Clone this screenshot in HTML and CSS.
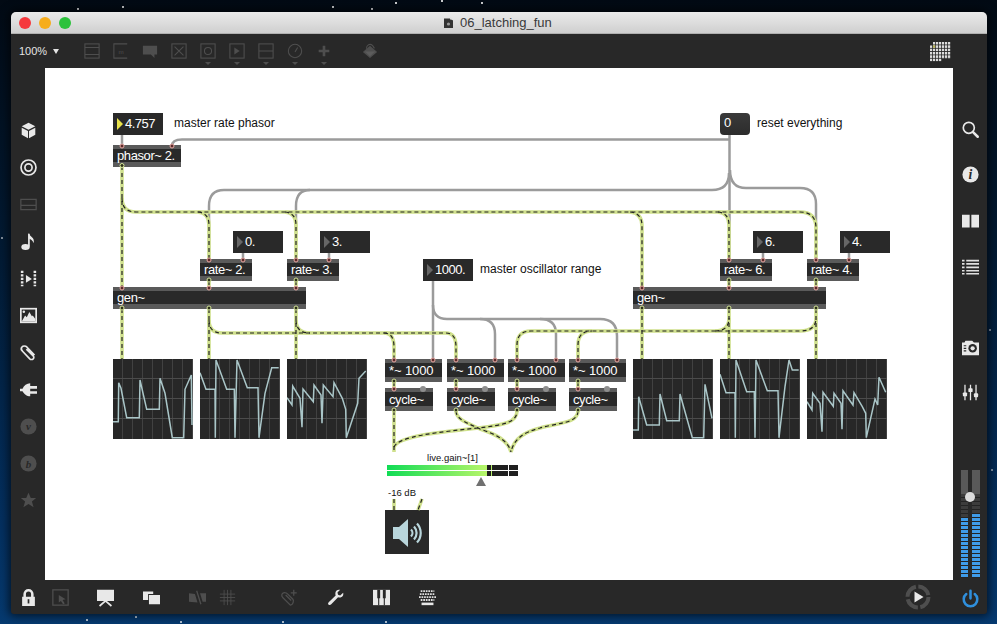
FILE: index.html
```html
<!DOCTYPE html>
<html lang="en">
<head>
<meta charset="utf-8">
<title>06_latching_fun</title>
<link rel="stylesheet" href="styles.css">
</head>
<body>
<div class="window">
  <header class="titlebar">
    <div class="lights"><span class="light red"></span><span class="light amber"></span><span class="light green"></span></div>
    <div class="title">
      <svg class="doc" viewBox="0 0 9 11"><path d="M0 1.5h6l3 2V11H0z" fill="#333"/><path d="M6 0l3 2.5H6z" fill="#ddd"/><circle cx="4.5" cy="7" r="1.6" fill="#999"/></svg>
      <span>06_latching_fun</span>
    </div>
  </header>

  <div class="toolbar">
    <div class="zoomlabel">100% <span class="zoomcaret"></span></div>
    <div class="tool"><svg class="ti" viewBox="0 0 18 18"><rect x="1" y="1" width="16" height="16" fill="none"/><path d="M1 5h16M1 13h16"/></svg></div>
    <div class="tool"><svg class="ti" viewBox="0 0 18 18"><path d="M16 1H1v16h15" fill="none"/><text x="9" y="12" class="ti-text">m</text></svg></div>
    <div class="tool"><svg class="ti" viewBox="0 0 18 18"><path class="fill" d="M1 3h16v10h-3v4l-4-4H1z"/></svg></div>
    <div class="tool"><svg class="ti" viewBox="0 0 18 18"><rect x="1" y="1" width="16" height="16" fill="none"/><path d="M4 4l10 10M14 4L4 14"/></svg></div>
    <div class="tool"><svg class="ti" viewBox="0 0 18 18"><rect x="1" y="1" width="16" height="16" fill="none"/><circle cx="9" cy="9" r="4" fill="none"/></svg><span class="caret"></span></div>
    <div class="tool"><svg class="ti" viewBox="0 0 18 18"><rect x="1" y="1" width="16" height="16" fill="none"/><path class="fill" d="M6 5l6 4-6 4z"/></svg><span class="caret"></span></div>
    <div class="tool"><svg class="ti" viewBox="0 0 18 18"><rect x="1" y="1" width="16" height="16" fill="none"/><path d="M1 9h16"/></svg><span class="caret"></span></div>
    <div class="tool"><svg class="ti" viewBox="0 0 18 18"><circle cx="9" cy="9" r="7.5" fill="none"/><path d="M9 10l3-5"/></svg><span class="caret"></span></div>
    <div class="tool"><svg class="ti" viewBox="0 0 18 18"><path class="fill" d="M7.5 3h3v4.500h4.500v3h-4.500V15h-3v-4.500H3v-3h4.500z"/></svg><span class="caret"></span></div>
    <div class="tool tool-paint"><svg class="ti" viewBox="0 0 18 18"><path class="fill" d="M9 3l8 7-8 7-8-7z"/><path d="M5 6.500C5 2 9 0 12 3l2 3" fill="none"/><path class="lit" d="M3 9.500h12L9 15z"/></svg></div>
    <svg class="gridicon" viewBox="0 0 21 20">
      <defs><pattern id="dots" width="3" height="3.333" patternUnits="userSpaceOnUse"><rect width="2.200" height="2.500" fill="#dcdcdc"/></pattern></defs>
      <path d="M3 0h18v16.700h-9V20H0V3.300h3z" fill="url(#dots)"/>
      <rect x="3" y="3.300" width="2.200" height="2.500" fill="#b9b45a"/>
    </svg>
  </div>

  <div class="middle">
    <nav class="side side-left">
      <svg class="si" viewBox="0 0 20 20"><path class="w" d="M10 1l8 4-8 4-8-4zM2 6.700l7.400 3.800V19L2 15zM18 6.700l-7.400 3.800V19L18 15z"/></svg>
      <svg class="si" viewBox="0 0 20 20"><circle cx="10" cy="10" r="8.800" class="wl"/><circle cx="10" cy="10" r="4.200" class="wl"/></svg>
      <svg class="si" viewBox="0 0 20 20"><path class="dl" d="M1 4h18v12H1zM1 11h18"/></svg>
      <svg class="si" viewBox="0 0 20 20"><ellipse cx="6.500" cy="16.500" rx="5" ry="3.500" class="w"/><path class="wl" d="M10.500 16V1"/><path class="w" d="M10 0c1 4 8 5 6 12-.5-3-4-5-6-5.500z"/></svg>
      <svg class="si" viewBox="0 0 20 20"><path class="w" d="M7 6l7 4.500L7 15z"/><path class="wdots" d="M2.500 1v18M17.500 1v18"/></svg>
      <svg class="si" viewBox="0 0 20 20"><rect x="1" y="2" width="18" height="16" class="wl"/><circle cx="4.500" cy="5.500" r="1.500" class="w"/><path class="w" d="M2 17l4-7 2 2 3-6 3 5 1-1 3 4v3z"/></svg>
      <svg class="si" viewBox="0 0 20 20"><path class="wl" d="M17 13L8 3.500C6.500 2 3.500 2 2.300 3.500 1 5 1.500 7 3 8.500l8.500 9c1 1 3 1 4 0s1-2.500 0-3.500L7.500 6"/></svg>
      <svg class="si" viewBox="0 0 20 20"><path class="w" d="M0 9h3C4.500 5 8 2.500 12 2.500V6h8v3h-8v3h8v3h-8v3C8 18 4.500 15 3 12H0z"/></svg>
      <svg class="si" viewBox="0 0 20 20"><circle cx="10" cy="10" r="9.500" class="d"/><text x="10" y="14" class="badge">v</text></svg>
      <svg class="si" viewBox="0 0 20 20"><circle cx="10" cy="10" r="9.500" class="d"/><text x="10" y="15" class="badge">b</text></svg>
      <svg class="si" viewBox="0 0 20 20"><path class="d" d="M10 1l2.700 6h6.300l-5 4.300 2 6.700-6-3.800L4 18l2-6.700L1 7h6.300z"/></svg>
    </nav>

    <main class="canvas">
      <div class="node num n-rate"><span class="tri tri-on"></span>4.757</div>
      <div class="node comment c-rate">master rate phasor</div>
      <div class="node obj n-phasor">phasor~ 2.</div>
      <div class="node msg n-reset">0</div>
      <div class="node comment c-reset">reset everything</div>

      <div class="node num n-a"><span class="tri"></span>0.</div>
      <div class="node num n-b"><span class="tri"></span>3.</div>
      <div class="node num n-c"><span class="tri"></span>6.</div>
      <div class="node num n-d"><span class="tri"></span>4.</div>

      <div class="node obj rate r-a">rate~ 2.</div>
      <div class="node obj rate r-b">rate~ 3.</div>
      <div class="node obj rate r-c">rate~ 6.</div>
      <div class="node obj rate r-d">rate~ 4.</div>

      <div class="node num n-range"><span class="tri"></span>1000.</div>
      <div class="node comment c-range">master oscillator range</div>

      <div class="node obj gen g-l">gen~</div>
      <div class="node obj gen g-r">gen~</div>

      <div class="node scope s-1"><svg viewBox="0 0 80 80"><polyline points="0,62.700 5.300,62.700 5.700,23.700 8,29.300 13.700,58.700 26.300,58.700 27,21 33.700,50.300 46.300,50.300 47,19.300 52,34.300 59.300,78.700 70.700,78.700 72,30.300 78.300,16 79,66"/></svg></div>
      <div class="node scope s-2"><svg viewBox="0 0 80 80"><polyline points="0,13.700 6,30.300 15,30.300 15.300,78.700 16,1 26.700,30.300 34.300,30.300 35,78.700 37,1 47.300,28.700 58,28.700 59,78.700 65,34.300 71.700,8.700 78.700,8.700"/></svg></div>
      <div class="node scope s-3"><svg viewBox="0 0 80 80"><polyline points="0,38.700 5,46 5.700,27 13,39.300 15,68.300 16,30 26.300,42.700 27,26 34,36 35,64.300 36.300,26 46,37.700 47,23.700 55.300,39.300 58.700,50.300 59.300,78.700 70.700,44.300 72,19.300 78.700,12"/></svg></div>
      <div class="node scope s-4"><svg viewBox="0 0 80 80"><polyline points="0,71 5.300,71 5.700,37.700 13.700,66 26.300,66 27,35 33.700,61.700 46.300,61.700 47,35 59.300,78.700 70.700,78.700 72,25.300 79,59.300"/></svg></div>
      <div class="node scope s-5"><svg viewBox="0 0 80 80"><polyline points="0,15.300 6,33.700 15,33.700 15.300,78.700 16,1 26.700,32.700 34.300,32.700 35,78.700 36,1 47.300,31.700 58,31.700 59,78.700 65,27.700 69,1 72.300,11 78.700,11"/></svg></div>
      <div class="node scope s-6"><svg viewBox="0 0 80 80"><polyline points="0,42.700 5,51 5.700,34.300 13,44.300 15,72.700 16,33.300 26.300,47.300 27,34.300 34,44.300 35,70.300 36,31.700 46,46 47,33.700 55.300,47.700 58.700,54.300 59.300,78.700 68,40 70.700,46 72,18.300 78.700,33.300"/></svg></div>

      <div class="node obj mul m-1">*~ 1000</div>
      <div class="node obj mul m-2">*~ 1000</div>
      <div class="node obj mul m-3">*~ 1000</div>
      <div class="node obj mul m-4">*~ 1000</div>

      <div class="node obj cyc y-1">cycle~</div>
      <div class="node obj cyc y-2">cycle~</div>
      <div class="node obj cyc y-3">cycle~</div>
      <div class="node obj cyc y-4">cycle~</div>

      <div class="node gain">
        <div class="gain-label">live.gain~[1]</div>
        <div class="gain-meter">
          <div class="gain-row"><span class="gain-fill"></span><span class="gain-tick"></span><span class="gain-div"></span></div>
          <div class="gain-row"><span class="gain-fill"></span><span class="gain-tick"></span><span class="gain-div"></span></div>
        </div>
        <span class="gain-thumb"></span>
      </div>
      <div class="node db">-16 dB</div>

      <div class="node dac">
        <svg viewBox="0 0 44 44"><path class="spk" d="M8 17h6l9-8v28l-9-8H8z"/><path class="spk-arc" d="M26 19.500a5 5 0 0 1 0 7M29 16.500a9.500 9.500 0 0 1 0 13M32 13.500a14 14 0 0 1 0 19"/></svg>
      </div>

      <svg class="wires" viewBox="45 68 908 512">
        <defs>
          <g id="sigpaths">
            <path d="M122 166V287"/>
            <path d="M122 198Q122 212 136 212H800Q816 212 816 228V259"/>
            <path d="M198 212Q209 213 209 225V259"/>
            <path d="M285 212Q296 213 296 225V259"/>
            <path d="M630 212Q642 213 642 226V287"/>
            <path d="M718 212Q729 213 729 225V259"/>
            <path d="M209 281V287M296 281V287M729 281V287M816 281V287"/>
            <path d="M122 309V359M209 309V359M296 309V359M642 309V359M729 309V359M816 309V359"/>
            <path d="M209 320Q209 333 222 333H446Q456 333 456 347V359"/>
            <path d="M384 333Q394 333 394 347V359"/>
            <path d="M296 320Q296 333 310 333"/>
            <path d="M517 359V345Q517 331 531 331H800Q816 331 816 318"/>
            <path d="M578 359V345Q578 331 592 331"/>
            <path d="M715 331Q729 331 729 318"/>
            <path d="M394 382V388M456 382V388M517 382V388M578 382V388"/>
            <path d="M394 411V452"/>
            <path d="M394 447C398 436 440 432 478 428C505 425 517 422 517 411"/>
            <path d="M456 411C456 420 470 424 480 429C495 434 508 440 511 452"/>
            <path d="M578 411C578 424 555 423 540 428C525 432 514 438 511 452"/>
            <path d="M394 499V510M422 499L418 510"/>
          </g>
        </defs>
        <g class="patch">
          <path d="M122 135V145"/>
          <path d="M729.500 135V259"/>
          <path d="M729 139.500H182Q172 139.500 172 146"/>
          <path d="M729 173Q729 190 712 190H224Q209 190 209 206V259"/>
          <path d="M310 190Q296 190 296 206V259"/>
          <path d="M730 170Q730 188 746 188H800Q816 188 816 204V259"/>
          <path d="M243 253V259M329 253V259M763 253V259M849 253V259"/>
          <path d="M433 281V359"/>
          <path d="M433 305Q433 319 447 319H600Q617 319 617 336V359"/>
          <path d="M480 319Q495 319 495 334V359"/>
          <path d="M540 319Q556 319 556 334V359"/>
        </g>
        <use href="#sigpaths" class="sig-base"/>
        <use href="#sigpaths" class="sig-dash"/>
        <g class="inlets">
          <circle cx="122" cy="146" r="2"/><circle cx="172" cy="146" r="2"/>
          <circle cx="122" cy="288" r="2"/><circle cx="209" cy="288" r="2"/><circle cx="296" cy="288" r="2"/>
          <circle cx="642" cy="288" r="2"/><circle cx="729" cy="288" r="2"/><circle cx="816" cy="288" r="2"/>
          <circle cx="209" cy="260" r="2"/><circle cx="243" cy="260" r="2"/><circle cx="296" cy="260" r="2"/><circle cx="329" cy="260" r="2"/>
          <circle cx="729" cy="260" r="2"/><circle cx="763" cy="260" r="2"/><circle cx="816" cy="260" r="2"/><circle cx="849" cy="260" r="2"/>
          <circle cx="394" cy="360" r="2"/><circle cx="433" cy="360" r="2"/><circle cx="456" cy="360" r="2"/><circle cx="495" cy="360" r="2"/>
          <circle cx="517" cy="360" r="2"/><circle cx="556" cy="360" r="2"/><circle cx="578" cy="360" r="2"/><circle cx="617" cy="360" r="2"/>
          <circle cx="394" cy="389" r="2"/><circle cx="456" cy="389" r="2"/><circle cx="517" cy="389" r="2"/><circle cx="578" cy="389" r="2"/>
        </g>
        <g class="inlets-dim">
          <circle cx="423" cy="389" r="3"/><circle cx="485" cy="389" r="3"/><circle cx="546" cy="389" r="3"/><circle cx="607" cy="389" r="3"/>
        </g>
        <g class="outlets">
          <circle cx="122" cy="165.500" r="2"/>
          <circle cx="209" cy="280" r="2"/><circle cx="296" cy="280" r="2"/><circle cx="729" cy="280" r="2"/><circle cx="816" cy="280" r="2"/>
          <circle cx="122" cy="308" r="2"/><circle cx="209" cy="308" r="2"/><circle cx="296" cy="308" r="2"/>
          <circle cx="642" cy="308" r="2"/><circle cx="729" cy="308" r="2"/><circle cx="816" cy="308" r="2"/>
          <circle cx="394" cy="381" r="2"/><circle cx="456" cy="381" r="2"/><circle cx="517" cy="381" r="2"/><circle cx="578" cy="381" r="2"/>
          <circle cx="394" cy="410" r="2"/><circle cx="456" cy="410" r="2"/><circle cx="517" cy="410" r="2"/><circle cx="578" cy="410" r="2"/>
        </g>
      </svg>
    </main>

    <aside class="side side-right">
      <svg class="si" viewBox="0 0 20 20"><circle cx="8" cy="8" r="6.500" class="wl"/><path class="wl thick" d="M13 13L18.500 18.500"/></svg>
      <svg class="si" viewBox="0 0 20 20"><circle cx="10" cy="10" r="9.500" class="w"/><text x="10" y="15.500" class="info">i</text></svg>
      <svg class="si book" viewBox="0 0 20 20"><path class="w" d="M0 2h9v15H0zM11 2h9v15h-9z"/></svg>
      <svg class="si" viewBox="0 0 20 20"><path class="wbars" d="M5 3h15M5 7h15M5 11h15M5 15h15M5 18.500h15"/><path class="wbars" d="M0 3h3M0 7h3M0 11h3M0 15h3M0 18.500h3"/></svg>
      <svg class="si camera" viewBox="0 0 20 20"><path class="w" d="M0 4h3l1-2h8l2 2h6v15H0z"/><circle cx="12.500" cy="11" r="5" class="k"/><circle cx="12.500" cy="11" r="2.500" class="w"/><path class="kl" d="M2 8h3M2 11h3M2 14h3"/></svg>
      <svg class="si" viewBox="0 0 20 20"><path class="wl thin" d="M3.500 1v18M10 1v18M16.500 1v18"/><rect x="1" y="10" width="5" height="4.500" rx="1" class="w"/><rect x="7.500" y="5" width="5" height="4.500" rx="1" class="w"/><rect x="14" y="11" width="5" height="4.500" rx="1" class="w"/></svg>
      <div class="dspmeter">
        <div class="dspcol"><span class="dsp-top"></span><span class="dsp-off dsp-off-l"></span><span class="dsp-blue dsp-blue-l"></span></div>
        <div class="dspcol"><span class="dsp-top"></span><span class="dsp-off dsp-off-r"></span><span class="dsp-blue dsp-blue-r"></span></div>
        <span class="dspknob"></span>
      </div>
    </aside>
  </div>

  <footer class="bottombar">
    <svg class="si" viewBox="0 0 20 20"><path class="wl thick" d="M5.500 9V6a4.500 4.500 0 0 1 9 0v3"/><path class="w" d="M2.500 9h15v11h-15z"/><rect x="9" y="12" width="2" height="5" class="k"/></svg>
    <svg class="si b-tight" viewBox="0 0 20 20"><rect x="1" y="1" width="18" height="18" class="dl"/><path class="d" d="M8 7l8 5-3.500 1 2.500 4-2 1-2.500-4-2.500 2z"/></svg>
    <svg class="si b-near" viewBox="0 0 20 20"><path class="w" d="M0 1h20v13H0z"/><path class="wl" d="M10 14l-7 6M10 14l7 6"/></svg>
    <svg class="si" viewBox="0 0 20 20"><path class="w" d="M0 3h12v3H6v7H0z"/><path class="w" d="M7 7h13v11H7z"/></svg>
    <svg class="si" viewBox="0 0 20 20"><path class="d" d="M0 5l7 1 3 10-10-1zM13 5h7v10h-4z"/><path class="dl" d="M9 2l5 16"/></svg>
    <svg class="si b-grid" viewBox="0 0 20 20"><path class="dl thin" d="M6 1v18M10 1v18M14 1v18M1 6h18M1 10h18M1 14h18"/></svg>
    <svg class="si b-far" viewBox="0 0 20 20"><path class="dl" d="M11 19L2 10C0 8 1 5 3 4.500S7 5 8 6l6 6c1.500 2 0 7-3 7zM5.500 7l6.500 6.500"/><path class="dl" d="M15 1v7M11.500 4.500h7"/></svg>
    <svg class="si" viewBox="0 0 20 20"><path class="w" d="M19 4.500l-3.500 3-2.500-.7-.7-2.600L15.500 1C12.500.2 9.700 2 9.800 5.500c0 1 .2 1.500.4 2L2 15.500c-1 1-1 2.300 0 3s2 .6 3-.5l8-8.300c4 1.500 7-1.500 6-5.200z"/></svg>
    <svg class="si" viewBox="0 0 20 20"><path class="w" d="M0 1h20v18H0z"/><path class="kl" d="M6.700 2v17M13.300 2v17"/><path class="k" d="M5 1h3.400v10H5zM11.600 1H15v10h-3.400z"/></svg>
    <svg class="si" viewBox="0 0 20 20"><path class="wkeys" d="M2 2.500h16M1 6h18M0 9.500h20M2 13h16"/><path class="w" d="M3 16h14v3H3z"/></svg>
    <svg class="playbtn" viewBox="0 0 26 26"><circle cx="13" cy="13" r="10.500" class="ring"/><path class="w" d="M9.500 7.500l9 5.500-9 5.500z"/></svg>
    <svg class="si powerbtn" viewBox="0 0 20 20"><path class="pw" d="M10 2v9M5 6a8 8 0 1 0 10 0"/></svg>
  </footer>
</div>
</body>
</html>
```

FILE: styles.css
```css
* { box-sizing: border-box; }
html, body { height: 100%; }
body {
  margin: 0;
  overflow: hidden;
  font-family: "Liberation Sans", Arial, sans-serif;
  background-color: #02101f;
  background-image:
    radial-gradient(circle at 78px 9px, #fff 0, rgba(255,255,255,.8) .7px, transparent 1.3px),
    radial-gradient(circle at 123px 7px, #fff 0, rgba(255,255,255,.8) .7px, transparent 1.3px),
    radial-gradient(circle at 333px 7px, #fff 0, rgba(255,255,255,.8) .7px, transparent 1.3px),
    radial-gradient(circle at 372px 9px, #fff 0, rgba(255,255,255,.8) .7px, transparent 1.3px),
    radial-gradient(circle at 396px 3px, #fff 0, rgba(255,255,255,.8) .7px, transparent 1.3px),
    radial-gradient(circle at 442px 1px, #fff 0, rgba(255,255,255,.8) .7px, transparent 1.3px),
    radial-gradient(circle at 482px 3px, #fff 0, rgba(255,255,255,.8) .7px, transparent 1.3px),
    radial-gradient(circle at 87px 620px, #cde 0, rgba(255,255,255,.7) .7px, transparent 1.3px),
    radial-gradient(circle at 136px 617px, #cde 0, rgba(255,255,255,.7) .7px, transparent 1.3px),
    radial-gradient(circle at 181px 622px, #cde 0, rgba(255,255,255,.7) .7px, transparent 1.3px),
    radial-gradient(circle at 283px 622px, #cde 0, rgba(255,255,255,.7) .7px, transparent 1.3px),
    radial-gradient(circle at 386px 622px, #cde 0, rgba(255,255,255,.7) .7px, transparent 1.3px),
    radial-gradient(circle at 2px 238px, #9bd 0, rgba(255,255,255,.5) .7px, transparent 1.3px),
    radial-gradient(circle at 990px 330px, #9bd 0, rgba(255,255,255,.5) .7px, transparent 1.3px),
    radial-gradient(circle at 992px 470px, #9bd 0, rgba(255,255,255,.5) .7px, transparent 1.3px),
    linear-gradient(180deg, #020a14 0, #021a33 40%, #043060 85%, #063a70 100%);
}

.window {
  margin: 12px 0 0 11px;
  width: 976px;
  height: 602px;
  display: flex;
  flex-direction: column;
  background: #282828;
  border-radius: 5px 5px 3px 3px;
  box-shadow: 0 0 10px 2px rgba(0,0,0,.65);
  overflow: hidden;
}

/* title bar */
.titlebar {
  height: 22px;
  flex: none;
  display: flex;
  align-items: center;
  position: relative;
  background: linear-gradient(180deg, #ebebeb, #cfcfcf);
  border-bottom: 1px solid #b0b0b0;
}
.lights { display: flex; gap: 8px; margin-left: 8px; }
.light { width: 12px; height: 12px; border-radius: 50%; }
.red { background: #f5393d; }
.amber { background: #f6ad1c; }
.green { background: #2cc23c; }
.title {
  position: absolute;
  left: 433px;
  top: 0;
  height: 21px;
  display: flex;
  align-items: center;
  gap: 7px;
  font-size: 13px;
  color: #3a3a3a;
}
.doc { width: 9px; height: 11px; }

/* top toolbar */
.toolbar {
  height: 34px;
  flex: none;
  display: flex;
  align-items: flex-start;
  gap: 11px;
  padding: 9px 0 0 8px;
  position: relative;
}
.zoomlabel {
  width: 52.5px;
  font-size: 11px;
  line-height: 16px;
  color: #e4e4e4;
  white-space: nowrap;
}
.zoomcaret {
  display: inline-block;
  margin-left: 3px;
  vertical-align: 1px;
  border-left: 3px solid transparent;
  border-right: 3px solid transparent;
  border-top: 5px solid #e4e4e4;
}
.tool { width: 18px; display: flex; flex-direction: column; align-items: center; gap: 3px; }
.tool-paint { margin-left: 17px; }
.ti { width: 18px; height: 16px; stroke: #4e4e4e; stroke-width: 1.2; fill: none; display: block; }
.ti .fill { fill: #4e4e4e; stroke: none; }
.ti .lit { fill: #5c5c5c; stroke: none; }
.ti-text { font-size: 7px; fill: #4e4e4e; stroke: none; text-anchor: middle; }
.caret {
  width: 0; height: 0;
  border-left: 3px solid transparent;
  border-right: 3px solid transparent;
  border-top: 3px solid #4e4e4e;
}
.gridicon { position: absolute; left: 919px; top: 8px; width: 21px; height: 20px; }

/* middle */
.middle { flex: 1; display: flex; min-height: 0; }
.side {
  width: 34px;
  flex: none;
  display: flex;
  flex-direction: column;
  align-items: center;
}
.side-left { gap: 20px; padding-top: 53.500px; }
.side-right { gap: 28px; padding-top: 52.500px; }
.book { margin-top: 2px; }
.camera { margin-top: 36px; }

.si { width: 17px; height: 17px; flex: none; display: block; overflow: visible; }
.w { fill: #e8e8e8; }
.k { fill: #282828; }
.kl { stroke: #282828; stroke-width: 1.300; fill: none; }
.wl { fill: none; stroke: #e8e8e8; stroke-width: 2; }
.wl.thick { stroke-width: 3; stroke-linecap: round; }
.wl.thin { stroke-width: 1.500; }
.wbars { fill: none; stroke: #e0e0e0; stroke-width: 2; }
.wdots { fill: none; stroke: #e8e8e8; stroke-width: 3; stroke-dasharray: 2.500 1.600; }
.wkeys { fill: none; stroke: #e0e0e0; stroke-width: 2.200; stroke-dasharray: 2 1; }
.d { fill: #4e4e4e; }
.dl { fill: none; stroke: #4e4e4e; stroke-width: 1.500; }
.dl.thin { stroke-width: 1; }
.badge { font: italic bold 13px "Liberation Serif", serif; fill: #282828; text-anchor: middle; }
.info { font: italic bold 16px "Liberation Serif", serif; fill: #282828; text-anchor: middle; }

/* canvas */
.canvas { width: 908px; background: #fff; position: relative; overflow: hidden; flex: none; }
.node { position: absolute; }
.wires { position: absolute; left: 0; top: 0; width: 908px; height: 512px; pointer-events: none; }

.patch path { fill: none; stroke: #9b9b9b; stroke-width: 2.500; }
.sig-base { fill: none; stroke: #cfe08c; stroke-width: 3.600; }
.sig-dash { fill: none; stroke: #232323; stroke-width: 1.200; stroke-dasharray: 4 3; }
.inlets circle { fill: #5c2a2a; stroke: #e8a9a4; stroke-width: 1; }
.inlets-dim circle { fill: #8e8e8e; }
.outlets circle { fill: #2c3018; stroke: #d8e89a; stroke-width: 1; }

.num {
  width: 50px;
  height: 22px;
  background: #292929;
  color: #fff;
  font-size: 13px;
  letter-spacing: -.5px;
  line-height: 22px;
  padding-left: 12px;
}
.tri {
  position: absolute;
  left: 4px;
  top: 5px;
  width: 0; height: 0;
  border-top: 6px solid transparent;
  border-bottom: 6px solid transparent;
  border-left: 6px solid #666;
}
.tri-on { border-left-color: #e8e24a; }
.obj {
  height: 22px;
  background: #292929;
  border-top: 4px solid #5a5a5a;
  border-bottom: 5px solid #5a5a5a;
  color: #fff;
  font-size: 13px;
  letter-spacing: -.4px;
  line-height: 13px;
  padding-left: 4px;
  white-space: nowrap;
}
.comment { font-size: 12px; line-height: 20px; color: #111; white-space: nowrap; }
.msg {
  left: 675px; top: 45px;
  width: 30px; height: 22px;
  border-radius: 4px;
  background: linear-gradient(180deg, #3a3a3a, #2c2c2c);
  color: #fff;
  font-size: 13px;
  line-height: 20px;
  padding-left: 4px;
}

.n-rate { left: 68px; top: 45px; }
.c-rate { left: 129px; top: 45px; }
.n-phasor { left: 68px; top: 77px; width: 68px; }
.c-reset { left: 712px; top: 45px; }
.n-a { left: 188px; top: 163px; }
.n-b { left: 275px; top: 163px; }
.n-c { left: 708px; top: 163px; }
.n-d { left: 795px; top: 163px; }
.rate { width: 52px; top: 191px; }
.r-a { left: 155px; }
.r-b { left: 242px; }
.r-c { left: 675px; }
.r-d { left: 762px; }
.n-range { left: 378px; top: 191px; }
.c-range { left: 435px; top: 191px; }
.gen { width: 193px; top: 219px; }
.g-l { left: 68px; }
.g-r { left: 588px; }

.scope {
  width: 80px;
  height: 80px;
  top: 291px;
  background-color: #272727;
  background-image:
    linear-gradient(#4c4c4c, #4c4c4c),
    linear-gradient(#4c4c4c, #4c4c4c),
    linear-gradient(#4c4c4c, #4c4c4c),
    repeating-linear-gradient(90deg, transparent 0, transparent 9px, #414141 9px, #414141 10px);
  background-size: 100% 1px, 100% 1px, 100% 1px, 100% 100%;
  background-position: 0 19px, 0 39px, 0 59px, 0 0;
  background-repeat: no-repeat;
}
.scope svg { display: block; width: 80px; height: 80px; }
.scope polyline { fill: none; stroke: #aac6c8; stroke-width: 1.500; }
.s-1 { left: 68px; }
.s-2 { left: 155px; }
.s-3 { left: 242px; }
.s-4 { left: 588px; }
.s-5 { left: 675px; }
.s-6 { left: 762px; }

.mul { width: 57px; height: 23px; top: 291px; letter-spacing: -.1px; line-height: 15px; }
.cyc { width: 48px; height: 23px; top: 320px; line-height: 15px; }
.m-1, .y-1 { left: 340px; }
.m-2, .y-2 { left: 402px; }
.m-3, .y-3 { left: 463px; }
.m-4, .y-4 { left: 524px; }

.gain { left: 342px; top: 384px; width: 131px; display: flex; flex-direction: column; }
.gain-label { height: 13px; font-size: 9.500px; line-height: 12px; text-align: center; color: #111; }
.gain-meter { display: flex; flex-direction: column; gap: 1px; }
.gain-row { height: 5px; background: #1f1f1f; position: relative; }
.gain-fill {
  position: absolute; left: 0; top: 0; bottom: 0;
  width: 100px;
  background: linear-gradient(90deg, #10dc55, #b8f56a);
}
.gain-tick { position: absolute; left: 104px; top: 0; bottom: 0; width: 1px; background: #b8ef6a; }
.gain-div { position: absolute; left: 121px; top: 0; bottom: 0; width: 1px; background: #fff; }
.gain-thumb {
  margin: 1px 0 0 89px;
  width: 0; height: 0;
  border-left: 5px solid transparent;
  border-right: 5px solid transparent;
  border-bottom: 9px solid #707070;
}
.db { left: 343px; top: 419px; font-size: 9.500px; line-height: 12px; color: #111; }
.dac { left: 340px; top: 442px; width: 44px; height: 44px; background: #292929; }
.dac svg { display: block; width: 44px; height: 44px; }
.spk { fill: #b9d6dc; }
.spk-arc { fill: none; stroke: #b9d6dc; stroke-width: 2.200; }

/* dsp meter */
.dspmeter {
  margin-top: auto;
  margin-bottom: 2px;
  height: 108px;
  display: flex;
  gap: 4px;
  position: relative;
}
.dspcol { width: 7.500px; display: flex; flex-direction: column; }
.dsp-top { height: 24px; background: #595959; flex: none; }
.dsp-off {
  flex: 1;
  background: repeating-linear-gradient(180deg, #3c3c3c 0, #3c3c3c 3px, #232323 3px, #232323 4px);
}
.dsp-blue {
  flex: none;
  background: repeating-linear-gradient(180deg, #3f9be8 0, #3f9be8 3px, #232323 3px, #232323 4px);
}
.dsp-blue-l { height: 60px; }
.dsp-blue-r { height: 64px; }
.dspknob {
  position: absolute;
  left: 4px; top: 22px;
  width: 10px; height: 10px;
  border-radius: 50%;
  background: #dcdcdc;
}

/* bottom bar */
.bottombar {
  height: 34px;
  flex: none;
  display: flex;
  align-items: center;
  gap: 29px;
  padding: 0 8.500px;
}
.b-tight { margin-left: -14px; }
.b-near { margin-left: -1px; }
.b-grid { margin-left: -16px; }
.b-far { margin-left: 16px; }
.playbtn { margin-left: auto; width: 26px; height: 26px; flex: none; display: block; }
.powerbtn { margin-left: 1.500px; }
.ring { fill: none; stroke: #4e4e4e; stroke-width: 4; stroke-dasharray: 14 2.500; }
.pw { fill: none; stroke: #2f8fdc; stroke-width: 3; stroke-linecap: round; }
```
